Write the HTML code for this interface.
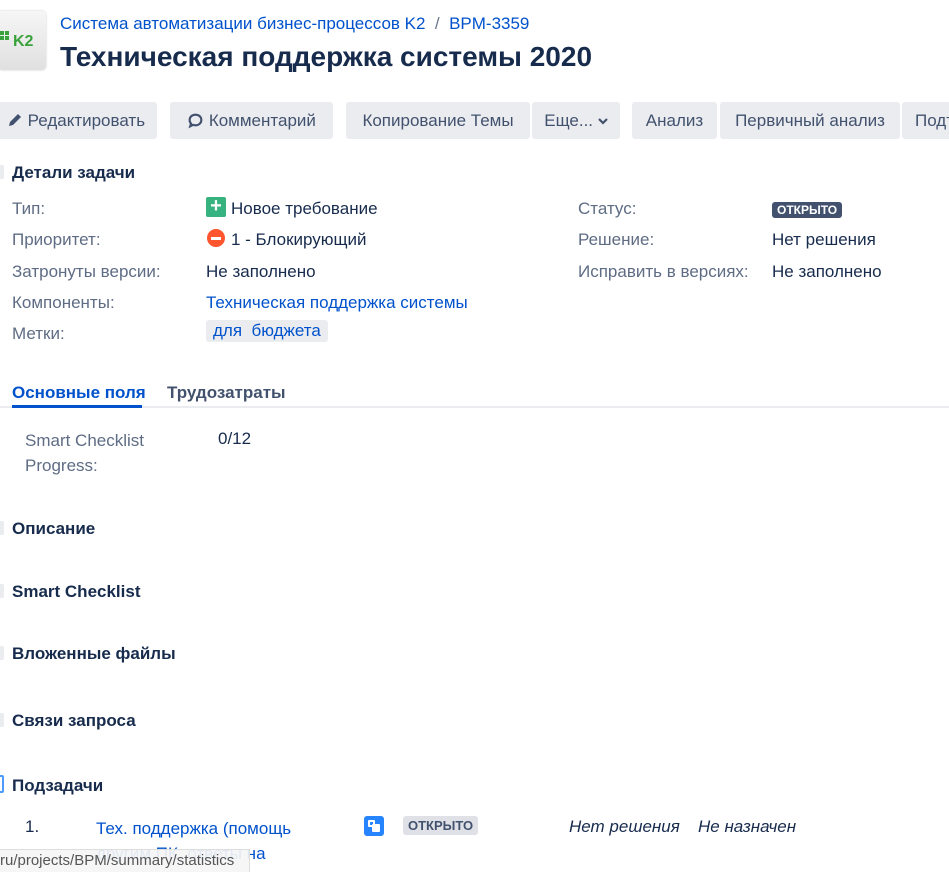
<!DOCTYPE html>
<html><head><meta charset="utf-8"><style>
*{margin:0;padding:0;box-sizing:border-box}
body{width:949px;height:872px;overflow:hidden;background:#fff;font-family:"Liberation Sans",sans-serif;font-size:17px;color:#172B4D;position:relative}
.a{position:absolute;white-space:nowrap}
.btn{position:absolute;top:102px;height:37px;background:#EBECF0;border-radius:3px;line-height:38px;font-size:17px;color:#42526E;text-align:center;overflow:hidden}
.lbl{color:#5E6C84}
.link{color:#0052CC}
.h{font-weight:bold;font-size:17px;color:#172B4D}
.tog{position:absolute;left:-4px;width:8px;height:14px;background:#EBECF0;border-radius:2px}
.lozd{background:#42526E;color:#fff;font-size:12px;font-weight:bold;padding:1px 5px;border-radius:3px}
</style></head><body>
<div class="a" style="left:-2px;top:11px;width:48px;height:59px;border-radius:4px;background:linear-gradient(#f6f6f6,#e0e0e0);box-shadow:0 0 2px #ccc"></div>
<div class="a" style="left:0;top:31px;width:4px;height:4px;background:#3aa23a;box-shadow:5px 0 #3aa23a,0 5px #3aa23a,5px 5px #3aa23a"></div>
<div class="a" style="left:13px;top:33px;font-weight:bold;color:#3aa23a;font-size:16px">K2</div>
<div class="a link" style="left:60px;top:14px;font-size:17px">Система автоматизации бизнес-процессов K2 <span style="color:#6B778C">&nbsp;/&nbsp;</span> BPM-3359</div>
<div class="a" style="left:60px;top:41px;font-size:28px;font-weight:bold;color:#172B4D">Техническая поддержка системы 2020</div>

<div class="btn" style="left:-5px;width:162px"><svg width="16" height="16" viewBox="0 0 16 16" style="vertical-align:-2px"><path d="M2 14l1-4 8-8 3 3-8 8z" fill="#42526E"/></svg> Редактировать</div>
<div class="btn" style="left:170px;width:163px"><svg width="17" height="17" viewBox="0 0 16 16" style="vertical-align:-3px"><path d="M8 2.5c3.3 0 5.5 2.2 5.5 5s-2.2 5-5.5 5c-.8 0-1.5-.1-2.2-.4L3 13.5l.8-2.6C2.9 10 2.5 8.8 2.5 7.5c0-2.8 2.2-5 5.5-5z" fill="none" stroke="#42526E" stroke-width="2"/></svg> Комментарий</div>
<div class="btn" style="left:346px;width:184px">Копирование Темы</div>
<div class="btn" style="left:532px;width:88px">Еще... <svg width="10" height="8" viewBox="0 0 10 8" style="vertical-align:1px"><path d="M1 2l4 4 4-4" fill="none" stroke="#42526E" stroke-width="2.2"/></svg></div>
<div class="btn" style="left:632px;width:85px">Анализ</div>
<div class="btn" style="left:720px;width:180px">Первичный анализ</div>
<div class="btn" style="left:902px;width:47px;text-align:left;padding-left:13px;border-radius:3px 0 0 3px">Подтвердить</div>

<div class="tog" style="top:165px"></div>
<div class="a h" style="left:12px;top:163px">Детали задачи</div>
<div class="a lbl" style="left:12px;top:199px">Тип:</div>
<div class="a lbl" style="left:12px;top:230px">Приоритет:</div>
<div class="a lbl" style="left:12px;top:262px">Затронуты версии:</div>
<div class="a lbl" style="left:12px;top:293px">Компоненты:</div>
<div class="a lbl" style="left:12px;top:324px">Метки:</div>
<div class="a" style="left:206px;top:197px;width:20px;height:20px;background:#36B37E;border-radius:2px;color:#fff;font-weight:bold;font-size:20px;line-height:19px;text-align:center">+</div>
<div class="a" style="left:231px;top:199px">Новое требование</div>
<div class="a" style="left:207px;top:229px;width:18px;height:18px;border-radius:50%;background:#FF5630"><div style="margin:7.5px 4px;height:3px;background:#fff"></div></div>
<div class="a" style="left:231px;top:230px">1 - Блокирующий</div>
<div class="a" style="left:206px;top:262px">Не заполнено</div>
<div class="a link" style="left:206px;top:293px">Техническая поддержка системы</div>
<div class="a link" style="left:206px;top:320px;background:#EBECF0;padding:3px 7px;border-radius:3px;line-height:16px">для&nbsp; бюджета</div>
<div class="a lbl" style="left:578px;top:199px">Статус:</div>
<div class="a lbl" style="left:578px;top:230px">Решение:</div>
<div class="a lbl" style="left:578px;top:262px">Исправить в версиях:</div>
<div class="a" style="left:772px;top:199px"><span class="lozd">ОТКРЫТО</span></div>
<div class="a" style="left:772px;top:230px">Нет решения</div>
<div class="a" style="left:772px;top:262px">Не заполнено</div>

<div class="a" style="left:0;top:406px;width:949px;height:2px;background:#EBECF0"></div>
<div class="a" style="left:12px;top:383px;color:#0052CC;font-weight:bold">Основные поля</div>
<div class="a" style="left:12px;top:405px;width:130px;height:3px;background:#0052CC"></div>
<div class="a" style="left:167px;top:383px;font-weight:bold;color:#42526E">Трудозатраты</div>
<div class="a lbl" style="left:25px;top:428px;line-height:25px">Smart Checklist<br>Progress:</div>
<div class="a" style="left:218px;top:429px">0/12</div>

<div class="tog" style="top:521px"></div><div class="a h" style="left:12px;top:519px">Описание</div>
<div class="tog" style="top:584px"></div><div class="a h" style="left:12px;top:582px">Smart Checklist</div>
<div class="tog" style="top:646px"></div><div class="a h" style="left:12px;top:644px">Вложенные файлы</div>
<div class="tog" style="top:713px"></div><div class="a h" style="left:12px;top:711px">Связи запроса</div>
<div class="tog" style="top:775px;border:2px solid #4C9AFF;background:#fff;height:18px"></div><div class="a h" style="left:12px;top:776px">Подзадачи</div>

<div class="a" style="left:25px;top:817px">1.</div>
<div class="a link" style="left:96px;top:816px;line-height:25px">Тех. поддержка (помощь<br>другим ПК, ответы на</div>
<div class="a" style="left:364px;top:816px;width:20px;height:20px;background:#2684FF;border-radius:3px"><div style="position:absolute;left:4px;top:4px;width:7px;height:7px;border:2px solid #fff;border-radius:1px"></div><div style="position:absolute;left:8px;top:8px;width:8px;height:8px;background:#fff;border-radius:1px"></div></div>
<div class="a" style="left:403px;top:816px;background:#DFE1E6;color:#42526E;font-size:13px;font-weight:bold;padding:2px 5px;border-radius:3px">ОТКРЫТО</div>
<div class="a" style="left:569px;top:817px;font-style:italic">Нет решения</div>
<div class="a" style="left:698px;top:817px;font-style:italic">Не назначен</div>

<div class="a" style="left:0;top:849px;width:250px;height:23px;background:rgba(245,245,245,.92);border-top:1px solid #ddd;border-right:1px solid #ddd;color:#555;font-size:15px;line-height:22px">ru/projects/BPM/summary/statistics</div>
</body></html>
